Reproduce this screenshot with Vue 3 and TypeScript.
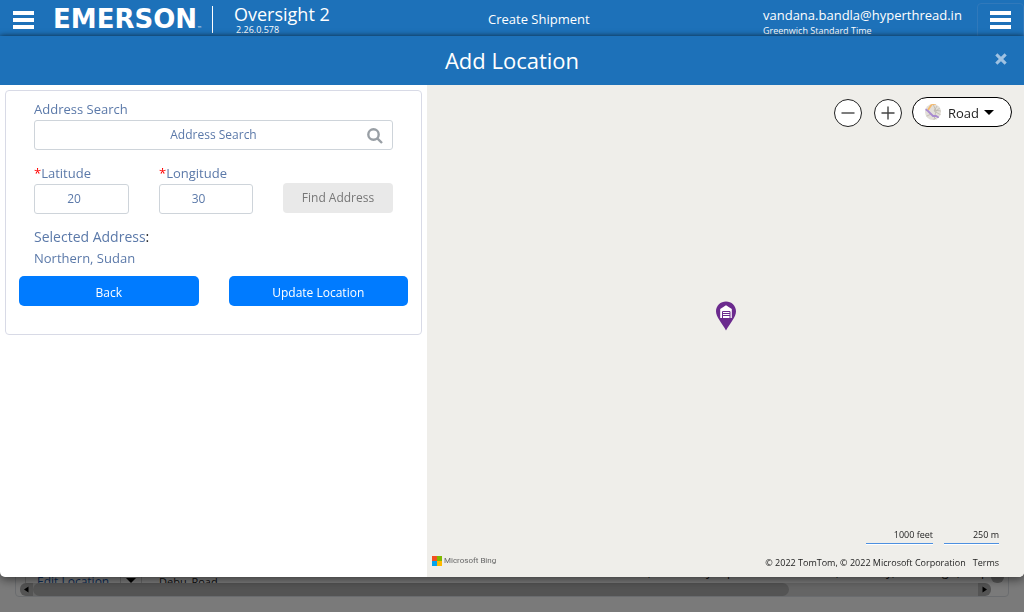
<script setup lang="ts">
import { ref } from 'vue'

const address = ref('')
const latitude = ref('20')
const longitude = ref('30')
const tail = [',', 'y', 'p', ',', 'y,', 'g', ',', 'p']
</script>

<template>
  <div class="page">
    <header class="bar">
      <button class="menu" aria-label="Menu"><span /><span /><span /></button>
      <div class="brand">EMERSON<small>™</small></div>
      <div class="product">
        <div class="name">Oversight 2</div>
        <div class="version">2.26.0.578</div>
      </div>
      <div class="crumb">Create Shipment</div>
      <div class="account">
        <div class="email">vandana.bandla@hyperthread.in</div>
        <div class="zone">Greenwich Standard Time</div>
      </div>
      <button class="menu framed" aria-label="Account menu"><span /><span /><span /></button>
    </header>

    <main class="behind">
      <section class="grid">
        <div class="row">
          <a class="edit" href="#">Edit Location</a>
          <span class="drop"><i class="caret" /></span>
          <span class="place">Debu_Road</span>
          <span class="tail"><span v-for="(t, i) in tail" :key="i">{{ t }}</span></span>
          <span class="vbar" />
        </div>
        <div class="hbar">
          <svg class="arrow" viewBox="0 0 13 13"><path d="M8.500 3.500v6L4 6.500z" /></svg>
          <div class="track"><div class="thumb" /></div>
          <svg class="arrow end" viewBox="0 0 13 13"><path d="M4.500 3.500v6L9 6.500z" /></svg>
        </div>
      </section>
    </main>

    <div class="overlay">
      <section class="modal" role="dialog" aria-labelledby="dialog-title">
        <div class="head">
          <h1 id="dialog-title">Add Location</h1>
          <button class="close" aria-label="Close">
            <svg viewBox="0 0 12 12"><path d="M2 2l8 8M10 2l-8 8" /></svg>
          </button>
        </div>
        <div class="body">
          <div class="side">
            <form class="card" @submit.prevent>
              <div class="fields">
                <label for="address">Address Search</label>
                <div class="search">
                  <input id="address" v-model="address" type="text" placeholder="Address Search" />
                  <svg viewBox="0 0 16 16"><circle cx="6.500" cy="6.500" r="5.200" /><path d="M10.300 10.300L15 15" /></svg>
                </div>
                <div class="coords">
                  <div class="field">
                    <label for="lat"><b>*</b>Latitude</label>
                    <input id="lat" v-model="latitude" type="text" inputmode="decimal" />
                  </div>
                  <div class="field">
                    <label for="lng"><b>*</b>Longitude</label>
                    <input id="lng" v-model="longitude" type="text" inputmode="decimal" />
                  </div>
                  <button class="find" type="button" disabled>Find Address</button>
                </div>
                <div class="selected">Selected Address<b>:</b></div>
                <div class="result">Northern, Sudan</div>
              </div>
              <div class="actions">
                <button type="button">Back</button>
                <button type="submit">Update Location</button>
              </div>
            </form>
          </div>
          <div class="map">
            <div class="tools">
              <button class="round" aria-label="Zoom out">
                <svg viewBox="0 0 28 28"><path d="M7 14h14" /></svg>
              </button>
              <button class="round" aria-label="Zoom in">
                <svg viewBox="0 0 28 28"><path d="M7 14h14M14 7v14" /></svg>
              </button>
              <button class="style">
                <svg viewBox="0 0 16 16">
                  <defs><clipPath id="disc"><circle cx="8" cy="8" r="8" /></clipPath></defs>
                  <g clip-path="url(#disc)" fill="none">
                    <rect width="16" height="16" fill="#e3dfd8" />
                    <path d="M9 6l7 1M8 0l3 7-2 9M12 2l-3 5 7 4M0 13l6-3 6 6M11 7l5-4" stroke="#bdb8ae" stroke-width="0.800" />
                    <path d="M3 6l4-6h4" stroke="#f5b96b" stroke-width="1.800" />
                    <path d="M0 5l3 2 5 5 3 0 5 3" stroke="#a98bd0" stroke-width="1.800" />
                  </g>
                </svg>
                <span>Road</span>
                <i class="caret" />
              </button>
            </div>
            <svg class="pin" viewBox="0 0 20 30">
              <path d="M10 0.500C4.500 0.500 0 4.700 0 10.300 0 16.500 6 22 10 29.500 14 22 20 16.500 20 10.300 20 4.700 15.500 0.500 10 0.500z" fill="#6b2a8e" />
              <path d="M4.200 17V8L10 4.300 15.800 8V17z" fill="#fff" />
              <path d="M6.500 17V10.500h7.500V17M6.500 12.500h7.500M6.500 14.500h7.500" fill="none" stroke="#6b2a8e" />
            </svg>
            <div class="foot">
              <div class="bing">
                <svg viewBox="0 0 10 10">
                  <path d="M0 0h5v5H0z" fill="#f25022" /><path d="M5 0h5v5H5z" fill="#7fba00" />
                  <path d="M0 5h5v5H0z" fill="#00a4ef" /><path d="M5 5h5v5H5z" fill="#ffb900" />
                </svg>
                Microsoft Bing
              </div>
              <div class="legal">
                <div class="scales"><span class="feet">1000 feet</span><span class="metres">250 m</span></div>
                <div class="copy">© 2022 TomTom, © 2022 Microsoft Corporation<a href="#">Terms</a></div>
              </div>
            </div>
          </div>
        </div>
      </section>
    </div>
  </div>
</template>

<style>
body {
  margin: 0;
}
</style>

<style scoped>
* {
  box-sizing: border-box;
}
.page {
  display: flex;
  flex-direction: column;
  height: 100vh;
  overflow: hidden;
  background: #f5f5f5;
  color: #222;
  font: 13px/18px 'Open Sans', sans-serif;
}
button,
input {
  font: inherit;
}
button {
  padding: 0;
  border: 0;
  cursor: pointer;
}
a {
  color: inherit;
  text-decoration: none;
}
.bar {
  display: flex;
  align-items: flex-start;
  flex: none;
  height: 40px;
  padding-left: 13px;
  background: #1d71b9;
  color: #fff;
}
.menu {
  display: flex;
  flex-direction: column;
  gap: 3px;
  width: 21px;
  margin-top: 11px;
  background: none;
}
.menu span {
  height: 4px;
  background: #fff;
}
.menu.framed {
  width: 47px;
  height: 36px;
  margin-top: 3px;
  padding: 7px 12px;
  border: 1px solid #3079bb;
  border-radius: 4px;
}
.brand {
  display: flex;
  align-items: flex-end;
  width: 160px;
  height: 27px;
  margin: 6px 0 0 19px;
  border-right: 1px solid #fff;
  font: bold 26px/27px 'DejaVu Sans', sans-serif;
}
.brand small {
  font: 5px/9px 'DejaVu Sans', sans-serif;
}
.product {
  width: 160px;
  margin: 4px 0 0 21px;
}
.name {
  font-size: 18px;
  line-height: 21px;
}
.version {
  padding-left: 2px;
  font-size: 9px;
  line-height: 10px;
  font-weight: 500;
}
.crumb {
  flex: 1;
  padding-top: 10px;
  padding-left: 94px;
}
.account {
  width: 214px;
  padding-top: 6px;
}
.zone {
  font-size: 9px;
  line-height: 13px;
}
.behind {
  display: flex;
  flex: 1;
  flex-direction: column;
  justify-content: flex-end;
  padding: 0 15px 15px;
}
.grid {
  border: 1px solid #d5d9de;
  border-radius: 4px;
  overflow: hidden;
}
.row {
  display: flex;
  height: 14px;
  overflow: hidden;
  font-size: 12px;
  line-height: 26px;
}
.edit {
  width: 95px;
  margin-left: 9px;
  padding-left: 11px;
  border-left: 1px solid #ccc;
  color: #1756a8;
}
.drop {
  display: flex;
  align-items: center;
  width: 22px;
  padding: 8px 0 0 5px;
  border: solid #ccc;
  border-width: 0 1px;
}
.place {
  flex: 1;
  padding-left: 17px;
  font-size: 11px;
}
.tail {
  display: grid;
  grid-template-columns: 58px 21px 109px 50px 56px 15px 24px 10px;
  line-height: 6px;
}
.vbar {
  width: 13px;
  margin-right: 4px;
  border-radius: 0 0 6px 6px;
  background: #a8a8a8;
}
.caret {
  border: solid transparent;
  border-width: 5px 5px 0;
  border-top-color: #000;
}
.hbar {
  display: flex;
  height: 13px;
  margin: 0 17px 0 4px;
}
.arrow {
  width: 13px;
  height: 13px;
  border-radius: 6px 0 0 6px;
  background: #a8a8a8;
}
.arrow.end {
  border-radius: 0 6px 6px 0;
}
.track {
  flex: 1;
  background: #cbcbcb;
}
.thumb {
  width: 80%;
  height: 13px;
  border-radius: 7px;
  background: #a8a8a8;
}
.overlay {
  position: fixed;
  inset: 36px 0 0;
  display: flex;
  padding-bottom: 35px;
  background: rgba(0, 0, 0, 0.5);
  box-shadow: 0 0 5px rgba(0, 0, 0, 0.5);
}
.modal {
  display: flex;
  flex: 1;
  flex-direction: column;
  border-radius: 0 0 5px 5px;
  overflow: hidden;
  background: #fff;
  box-shadow: 0 3px 10px rgba(0, 0, 0, 0.5);
}
.head {
  display: grid;
  grid-template-columns: 1fr auto 1fr;
  align-items: center;
  height: 49px;
  padding-bottom: 2px;
  background: #1d71b9;
  color: #fff;
}
.head h1 {
  grid-column: 2;
  margin: 0;
  font-size: 22px;
  line-height: 30px;
  font-weight: 400;
}
.close {
  justify-self: end;
  width: 14px;
  height: 14px;
  margin: 0 16px 2px 0;
  background: none;
}
.close svg {
  display: block;
  width: 14px;
  fill: none;
  stroke: #9fc2e2;
  stroke-width: 2.600;
}
.body {
  display: flex;
  flex: 1;
}
.side {
  width: 427px;
  padding: 5px;
}
.card {
  padding: 10px 13px 28px;
  border: 1px solid #d8dae6;
  border-radius: 4px;
  color: #5b79a9;
}
.fields {
  padding: 0 15px;
}
.fields label {
  display: block;
  line-height: 17px;
}
.fields b {
  color: #f00;
  font-weight: 400;
}
input {
  display: block;
  width: 100%;
  height: 30px;
  padding: 0 0 2px;
  border: 1px solid #ced4da;
  border-radius: 3px;
  background: #fff;
  color: #5b79a9;
  font-size: 12px;
  text-align: center;
}
.search {
  position: relative;
  margin: 2px 0 15px;
}
input::placeholder {
  color: #5b79a9;
  opacity: 1;
}
.search svg {
  position: absolute;
  top: 8px;
  right: 10px;
  width: 16px;
  fill: none;
  stroke: #999fa5;
  stroke-width: 2.400;
}
.coords {
  display: grid;
  grid-template-columns: 95fr 94fr 110fr;
  gap: 30px;
  align-items: end;
}
.coords input {
  margin-top: 2px;
  padding-right: 15px;
}
.find {
  height: 30px;
  margin-bottom: 1px;
  border-radius: 4px;
  background: #e9e9e9;
  color: #777;
  font-size: 12px;
}
.selected {
  margin-top: 13px;
  font-size: 14px;
  line-height: 20px;
}
.selected b {
  color: #222;
}
.result {
  margin-top: 2px;
  line-height: 19px;
}
.actions {
  display: grid;
  grid-template-columns: 1fr 1fr;
  gap: 30px;
  margin-top: 8px;
}
.actions button {
  height: 30px;
  padding-top: 4px;
  border-radius: 5px;
  background: #007bff;
  color: #fff;
  font-size: 12px;
}
.map {
  position: relative;
  display: flex;
  flex: 1;
  flex-direction: column;
  justify-content: space-between;
  background: #efeeea;
  color: #222;
}
.tools {
  display: flex;
  justify-content: flex-end;
  gap: 12px;
  padding: 12px 12px 0 0;
}
.round {
  width: 28px;
  height: 28px;
  margin-top: 2px;
  border: 1px solid #222;
  border-radius: 50%;
  background: #fff;
}
.round svg {
  display: block;
  fill: none;
  stroke: #444;
  stroke-width: 1.500;
}
.round + .style {
  margin-left: -2px;
}
.style {
  display: flex;
  align-items: center;
  width: 100px;
  height: 30px;
  padding: 0 12px;
  border: 1px solid #000;
  border-radius: 15px;
  background: #fff;
  color: #222;
}
.style svg {
  width: 16px;
}
.style span {
  flex: 1;
  padding: 2px 0 0 7px;
  text-align: left;
}
.style .caret {
  margin-right: 5px;
}
.pin {
  position: absolute;
  top: 216px;
  left: 50%;
  width: 20px;
  height: 30px;
  margin-left: -10px;
}
.foot {
  display: flex;
  align-items: flex-end;
  justify-content: space-between;
  padding: 0 25px 6px 5px;
  font-size: 9px;
  line-height: 16px;
}
.bing {
  display: flex;
  align-items: center;
  gap: 2px;
  margin-bottom: 2px;
  color: #666;
  font-family: Roboto, sans-serif;
  font-size: 8px;
}
.bing svg {
  width: 10px;
}
.scales {
  display: flex;
  justify-content: flex-end;
  gap: 11px;
  margin-bottom: 11px;
  text-align: right;
}
.scales span {
  border-bottom: 1px solid #4d90e0;
  box-shadow: 0 1px #fff;
}
.feet {
  width: 67px;
}
.metres {
  width: 55px;
}
.copy {
  display: flex;
  gap: 7px;
}
</style>
